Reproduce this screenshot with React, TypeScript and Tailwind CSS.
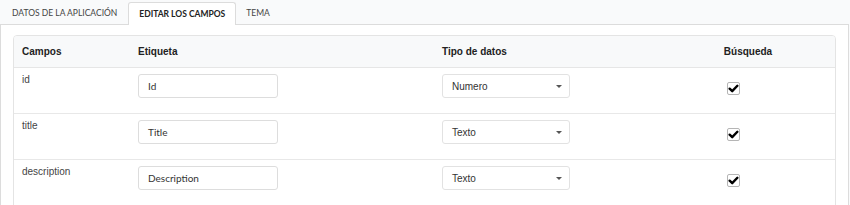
const rows = [
  { field: 'id', label: 'Id', type: 'Numero' },
  { field: 'title', label: 'Title', type: 'Texto' },
  { field: 'description', label: 'Description', type: 'Texto' },
];

function Check() {
  return (
    <span className="inline-flex h-[13px] w-[13px] items-center justify-center rounded-[2px] border border-[#b5b5b5] bg-white">
      <svg viewBox="0 0 12 12" className="h-[11px] w-[11px]">
        <path d="M1.8 6.2 L4.6 8.9 L10.2 3" fill="none" stroke="#000" strokeWidth="2.6" strokeLinecap="round" strokeLinejoin="round" />
      </svg>
    </span>
  );
}

export default function App() {
  return (
    <div className="h-[205px] w-[850px] overflow-hidden bg-[#f9fafb] text-[#333]">
      <div className="flex h-[24px] items-end pl-[1px] pt-[2px] font-['Lato',sans-serif] text-[8.5px] uppercase text-[#444]">
        <div className="flex h-[22px] items-center px-[11px]">Datos de la aplicación</div>
        <div className="relative z-10 mb-[-1px] flex h-[23px] items-center rounded-t-[3px] border border-b-0 border-[#dcdcdc] bg-white px-[10px] font-bold text-[#222]">
          Editar los campos
        </div>
        <div className="flex h-[22px] items-center px-[10px]">Tema</div>
      </div>
      <div className="h-[200px] w-[849px] border border-[#dcdcdc] bg-white px-[12px] pt-[10px]">
        <div className="overflow-hidden rounded-t-[4px] border border-[#e4e4e4]">
          <div className="grid h-[32px] grid-cols-[115px_305px_227px_1fr] items-center border-b border-[#e6e6e6] bg-[#f8f9fa] font-['Liberation_Sans',Arial,sans-serif] text-[10px] font-bold text-[#222]">
            <div className="pl-[8px]">Campos</div>
            <div className="pl-[9px]">Etiqueta</div>
            <div className="pl-[8px]">Tipo de datos</div>
            <div className="text-center">Búsqueda</div>
          </div>
          {rows.map((r) => (
            <div
              key={r.field}
              className="grid h-[46px] grid-cols-[115px_305px_227px_1fr] border-b border-[#e8e8e8] font-['Lato',sans-serif] text-[10px] text-[#333]"
            >
              <div className="pl-[8px] pt-[4px] font-['Liberation_Sans',Arial,sans-serif] text-[#444]">{r.field}</div>
              <div className="pl-[9px] pt-[6px]">
                <div className="flex h-[24px] w-[140px] items-center rounded-[3px] border border-[#dddddd] px-[9px]">{r.label}</div>
              </div>
              <div className="pl-[8px] pt-[6px]">
                <div className="flex h-[24px] w-[128px] items-center justify-between rounded-[3px] border border-[#e2e2e2] pl-[9px] pr-[7px] font-['Liberation_Sans',Arial,sans-serif] text-[#333]">
                  <span>{r.type}</span>
                  <span className="h-0 w-0 border-x-[3px] border-t-[3px] border-x-transparent border-t-[#555]" />
                </div>
              </div>
              <div className="pl-[66px] pt-[14px]">
                <Check />
              </div>
            </div>
          ))}
        </div>
      </div>
    </div>
  );
}
